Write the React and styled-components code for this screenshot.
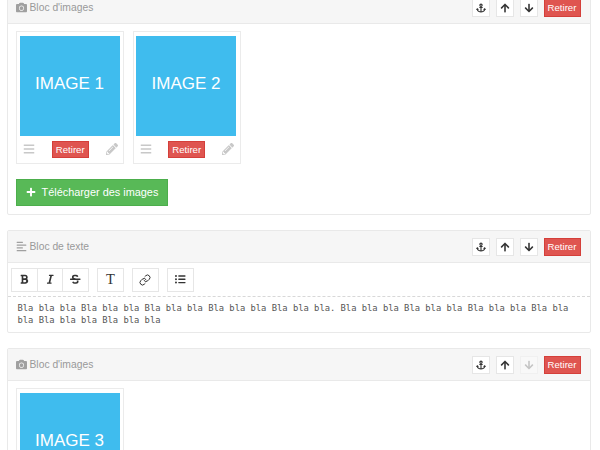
import React from "react";
import styled, { createGlobalStyle } from "styled-components";
import { FaCamera, FaAnchor, FaArrowUp, FaArrowDown, FaBars, FaPencilAlt, FaPlus, FaBold, FaItalic, FaStrikethrough, FaListUl, FaAlignLeft } from "react-icons/fa";
import { Link as LinkIcon } from "lucide-react";

const Global = createGlobalStyle`
  html, body { margin: 0; padding: 0; background: #fff; height: 450px; overflow: hidden; }
  * { box-sizing: border-box; }
  body { font-family: "Liberation Sans", Arial, sans-serif; }
`;
const Page = styled.div`
  display: flex; flex-direction: column; gap: 15px;
  padding: 0 9px 0 7px; margin-top: -9.5px;
`;
const Panel = styled.section`
  border: 1.5px solid #e9e9e9; border-radius: 2px; background: #fff;
`;
const Header = styled.header`
  display: flex; align-items: center; justify-content: space-between;
  height: 32px; padding: 0 9.5px 0 7.5px;
  background: #f6f6f6; border-bottom: 1.5px solid #e9e9e9;
`;
const Title = styled.div`
  display: flex; align-items: center; gap: 3px;
  font-size: 10.3px; color: #999;
  svg { color: #a0a0a0; font-size: 11px; }
`;
const Actions = styled.div`display: flex; align-items: center; gap: 5.5px; padding-top: 1px;`;
const Square = styled.button`
  width: 18.5px; height: 18px; padding: 0; display: flex; align-items: center; justify-content: center;
  background: ${p => p.$off ? "#f8f8f8" : "#fff"};
  border: 1px solid ${p => p.$off ? "#f0f0f0" : "#e6e6e6"};
  color: ${p => p.$off ? "#c4c4c4" : "#333"}; font-size: 10px;
`;
const Remove = styled.button`
  height: ${p => p.$small ? 17 : 18}px; width: 37px; padding: 0;
  background: #df5550; border: 1px solid #d43f3a; color: #fff;
  font: 9.6px "Liberation Sans", Arial, sans-serif; text-align: center;
`;
const Body = styled.div`padding: 7px 8px 8px 8px;`;
const Cards = styled.div`display: flex; gap: 8.5px;`;
const Card = styled.div`
  width: 108px; height: 133px; padding: 4px 2.5px 0 2.5px;
  border: 1.5px solid #ebebeb; background: #fff;
`;
const Picture = styled.div`
  width: 100px; height: 100px; background: #3fbcee; color: #fff;
  display: flex; align-items: center; justify-content: center;
  font-size: 17px; font-weight: 400; padding-bottom: 4px;
`;
const CardBar = styled.div`
  display: flex; align-items: center; justify-content: space-between;
  padding: 5px 3px 0 3.5px;
  color: #c8c8c8; font-size: 12px;
`;
const Gray = styled.span`display: flex; width: 12px; justify-content: center;`;
const Upload = styled.button`
  display: flex; align-items: center; gap: 5.5px;
  margin-top: 15px; height: 27px; width: 152px; padding: 0 0 0 9px;
  background: #58b957; border: 1px solid #4cae4c; color: #fff;
  font: 10.9px "Liberation Sans", Arial, sans-serif;
  svg { font-size: 10px; }
`;
const Toolbar = styled.div`
  display: flex; gap: 8px; padding: 5px 3px 0; height: 34px;
  border-bottom: 1px dashed #d8d8d8;
`;
const Group = styled.div`display: flex;`;
const Tool = styled.button`
  width: ${p => p.$w || 27}px; height: 24px; padding: 0;
  margin-left: ${p => p.$joined ? "-1px" : "0"};
  display: flex; align-items: center; justify-content: center;
  background: #fff; border: 1px solid #e6e6e6; color: #333; font-size: 10.5px;
`;
const SerifT = styled.span`font: 14.5px "Liberation Serif", serif; color: #333; line-height: 1;`;
const Text = styled.p`
  margin: 0; padding: 5px 9px 6px 9.5px;
  font: 8.8px/12px "DejaVu Sans Mono", monospace; color: #555;
  white-space: pre-wrap;
`;

const Head = ({ icon, title, noDown }) => (
  <Header>
    <Title>{icon}{title}</Title>
    <Actions>
      <Square><FaAnchor /></Square>
      <Square><FaArrowUp /></Square>
      <Square $off={noDown}><FaArrowDown /></Square>
      <Remove>Retirer</Remove>
    </Actions>
  </Header>
);
const ImageCard = ({ n }) => (
  <Card>
    <Picture>IMAGE {n}</Picture>
    <CardBar>
      <Gray><FaBars /></Gray>
      <Remove $small>Retirer</Remove>
      <Gray><FaPencilAlt /></Gray>
    </CardBar>
  </Card>
);

export default function App() {
  return (
    <>
      <Global />
      <Page>
        <Panel>
          <Head icon={<FaCamera />} title="Bloc d'images" />
          <Body>
            <Cards><ImageCard n={1} /><ImageCard n={2} /></Cards>
            <Upload><FaPlus />Télécharger des images</Upload>
          </Body>
        </Panel>
        <Panel>
          <Head icon={<FaAlignLeft />} title="Bloc de texte" />
          <Toolbar>
            <Group>
              <Tool $w={26.67}><FaBold /></Tool>
              <Tool $w={26.67} $joined><FaItalic /></Tool>
              <Tool $w={26.67} $joined><FaStrikethrough /></Tool>
            </Group>
            <Tool><SerifT>T</SerifT></Tool>
            <Tool><LinkIcon size={12} strokeWidth={2} /></Tool>
            <Tool><FaListUl /></Tool>
          </Toolbar>
          <Text>Bla bla bla Bla bla bla Bla bla bla Bla bla bla Bla bla bla. Bla bla bla Bla bla bla Bla bla bla Bla bla bla Bla bla bla Bla bla bla</Text>
        </Panel>
        <Panel>
          <Head icon={<FaCamera />} title="Bloc d'images" noDown />
          <Body>
            <Cards><ImageCard n={3} /></Cards>
          </Body>
        </Panel>
      </Page>
    </>
  );
}
